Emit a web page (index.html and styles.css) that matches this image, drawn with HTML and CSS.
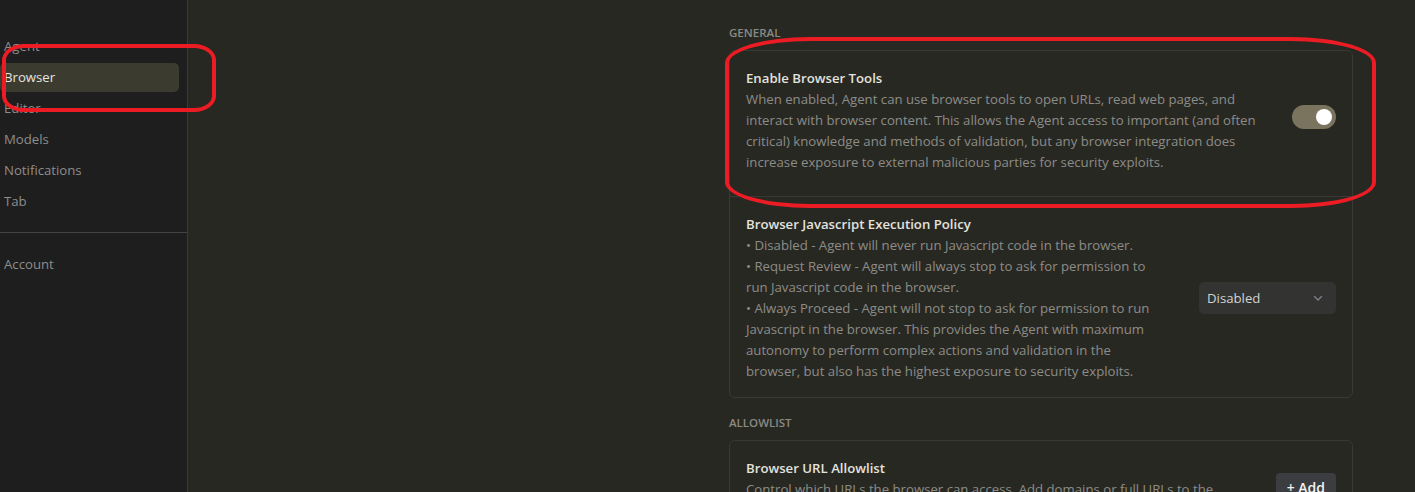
FILE: index.html
```html
<!DOCTYPE html>
<html lang="en">
<head>
<meta charset="utf-8">
<title>Settings - Browser</title>
<link rel="stylesheet" href="styles.css">
</head>
<body>
<div class="app">
  <aside class="sidebar">
    <nav class="nav">
      <div class="nav-item">Agent</div>
      <div class="nav-item is-active">Browser</div>
      <div class="nav-item">Editor</div>
      <div class="nav-item">Models</div>
      <div class="nav-item">Notifications</div>
      <div class="nav-item">Tab</div>
    </nav>
    <div class="nav-divider"></div>
    <nav class="nav">
      <div class="nav-item">Account</div>
    </nav>
  </aside>
  <main class="main">
    <div class="content">
      <div class="section-label">General</div>
      <div class="card">
        <div class="row row-first">
          <div class="row-text">
            <div class="row-title">Enable Browser Tools</div>
            <div class="row-desc">When enabled, Agent can use browser tools to open URLs, read web pages, and interact with browser content. This allows the Agent access to important (and often critical) knowledge and methods of validation, but any browser integration does increase exposure to external malicious parties for security exploits.</div>
          </div>
          <div class="toggle"><span class="toggle-knob"></span></div>
        </div>
        <div class="row">
          <div class="row-text">
            <div class="row-title">Browser Javascript Execution Policy</div>
            <div class="row-desc">• Disabled - Agent will never run Javascript code in the browser.<br>• Request Review - Agent will always stop to ask for permission to run Javascript code in the browser.<br>• Always Proceed - Agent will not stop to ask for permission to run Javascript in the browser. This provides the Agent with maximum autonomy to perform complex actions and validation in the browser, but also has the highest exposure to security exploits.</div>
          </div>
          <div class="select">
            <span class="select-value">Disabled</span>
            <svg class="select-chevron" width="12" height="12" viewBox="0 0 12 12"><path d="M2.5 4.5 L6 8 L9.5 4.5" fill="none" stroke="currentColor" stroke-width="1.3" stroke-linecap="round" stroke-linejoin="round"/></svg>
          </div>
        </div>
      </div>

      <div class="section-label section-gap">Allowlist</div>
      <div class="card">
        <div class="row">
          <div class="row-text">
            <div class="row-title">Browser URL Allowlist</div>
            <div class="row-desc">Control which URLs the browser can access. Add domains or full URLs to the allowlist to permit the Agent to visit them.</div>
          </div>
          <div class="add-btn">+ Add</div>
        </div>
      </div>
    </div>
  </main>
</div>
<div class="mark mark-sidebar"></div>
<div class="mark mark-card"></div>
</body>
</html>
```
FILE: styles.css
```css
* { box-sizing: border-box; }
html, body { margin: 0; height: 100%; }
body {
  background: #282823;
  font-family: "Segoe UI", "Open Sans", "Noto Sans", sans-serif;
  font-size: 13.2px;
  color: #8c8c87;
  overflow: hidden;
  position: relative;
}
.app {
  display: flex;
  height: 492px;
}
.sidebar {
  width: 188px;
  flex: none;
  background: #1e1e1e;
  border-right: 1px solid #3a3a36;
  padding-top: 32px;
  font-size: 13.2px;
}
.nav {
  display: flex;
  flex-direction: column;
  gap: 2px;
  padding-right: 8px;
}
.nav-item {
  height: 29px;
  line-height: 29px;
  padding-left: 4px;
  color: #8d8d8d;
  border-radius: 5px;
}
.nav-item.is-active {
  background: #3c3b30;
  color: #e4e4e0;
}
.nav-divider {
  height: 1px;
  background: #444442;
  margin: 16px 0 17px;
}
.main {
  flex: 1;
  padding-top: 24px;
  padding-left: 541px;
}
.content {
  width: 624px;
}
.section-label {
  font-size: 11.5px;
  font-weight: 600;
  text-transform: uppercase;
  line-height: 18px;
  color: #8a8a84;
  margin-bottom: 8px;
}
.section-gap { margin-top: 16px; }
.card {
  border: 1px solid #393934;
  border-radius: 6px;
}
.row {
  display: flex;
  align-items: center;
  gap: 32px;
  padding: 17px 16px 15px;
}
.row + .row { border-top: 1px solid #393934; }
.row-first { padding-bottom: 23px; }
.row-text {
  flex: 1;
  min-width: 0;
}
.row-title {
  color: #e2e2de;
  font-weight: 600;
  line-height: 21px;
}
.row-desc {
  line-height: 21px;
}
.toggle {
  flex: none;
  width: 44px;
  height: 24px;
  border-radius: 12px;
  background: #7a745f;
  display: flex;
  align-items: center;
  justify-content: flex-end;
  padding-right: 4px;
  margin-bottom: 8px;
}
.toggle-knob {
  width: 16px;
  height: 16px;
  border-radius: 50%;
  background: #ffffff;
}
.select {
  flex: none;
  width: 137px;
  height: 32px;
  border-radius: 5px;
  background: #333431;
  display: flex;
  align-items: center;
  justify-content: space-between;
  padding: 0 12px 0 8px;
  color: #d2d2d0;
}
.select-chevron { color: #7e7f88; }
.add-btn {
  flex: none;
  align-self: flex-start;
  margin-top: 15px;
  height: 30px;
  line-height: 30px;
  padding: 0 11px;
  border-radius: 4px;
  background: #3b3d41;
  color: #f2f2f2;
  font-weight: 600;
  font-size: 14px;
}
.mark {
  position: absolute;
  border: 4px solid #ec1c24;
  pointer-events: none;
}
.mark-sidebar {
  left: 2px;
  top: 44px;
  width: 214px;
  height: 68px;
  border-radius: 22px / 16px;
}
.mark-card {
  left: 725px;
  top: 37px;
  width: 651px;
  height: 171px;
  border-radius: 85px / 26px;
}
```
